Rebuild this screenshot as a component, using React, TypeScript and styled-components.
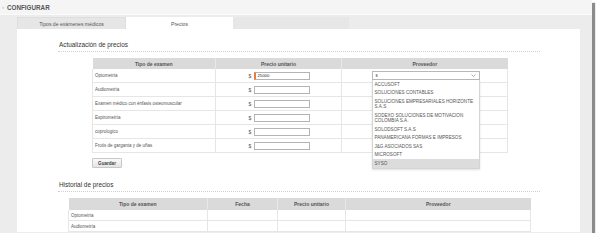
import React from 'react';
import styled, { createGlobalStyle } from 'styled-components';

const GlobalStyle = createGlobalStyle`
  html, body {
    margin: 0;
    padding: 0;
    background: #ffffff;
  }
  body {
    font-family: "Liberation Sans", Arial, sans-serif;
    color: #444;
  }
`;

const Frame = styled.div`
  width: 592px;
  height: 233px;
  background: #ececec;
  box-shadow: 3px 3px 1px rgba(0, 0, 0, 0.45);
  overflow: hidden;
  display: flex;
  flex-direction: column;
`;

const TopBar = styled.div`
  height: 14px;
  flex: none;
  background: #f5f5f5;
  border-bottom: 1px solid #fbfbfb;
  display: flex;
  align-items: center;
  padding-left: 2px;
  gap: 3px;
`;

const Marker = styled.span`
  font-size: 6px;
  color: #aaa;
`;

const TopTitle = styled.span`
  font-size: 6.3px;
  font-weight: bold;
  color: #555;
`;

const Body = styled.div`
  flex: 1;
  min-height: 0;
  display: flex;
  flex-direction: column;
  padding: 2px 12px 1px 17px;
`;

const Tabs = styled.div`
  display: flex;
  height: 12px;
  flex: none;
`;

const Tab = styled.div<{ $active?: boolean; $w: number }>`
  width: ${(p) => p.$w}px;
  display: flex;
  align-items: center;
  justify-content: center;
  font-size: 5.1px;
  color: #555;
  background: ${(p) => (p.$active ? '#ffffff' : '#e6e6e6')};
  border: 1px solid ${(p) => (p.$active ? '#ffffff' : '#dedede')};
  border-bottom: none;
  box-sizing: border-box;
`;

const TabFiller = styled.div`
  width: 116px;
  background: #e7e7e7;
`;

const Panel = styled.div`
  flex: 1;
  min-height: 0;
  overflow: hidden;
  background: #ffffff;
  padding: 12px 40px 0 41px;
`;

const SectionTitle = styled.div<{ $top?: number }>`
  margin-top: ${(p) => p.$top ?? 0}px;
  font-size: 6.4px;
  line-height: 8px;
  color: #333;
  padding: 0 0 2px 1px;
  border-bottom: 1px dotted #cfcfcf;
`;

const Table = styled.table<{ $left: number; $w: number }>`
  margin: 6px 0 0 ${(p) => p.$left}px;
  width: ${(p) => p.$w}px;
  border-collapse: collapse;
  table-layout: fixed;
`;

const Th = styled.th<{ $h: number }>`
  height: ${(p) => p.$h}px;
  padding: 0;
  background: #dadada;
  font-size: 5px;
  font-weight: bold;
  color: #555;
  text-align: center;
  border-left: 1px solid #e8e8e8;
  &:first-child {
    border-left: none;
  }
`;

const Td = styled.td<{ $h: number; $center?: boolean }>`
  height: ${(p) => p.$h}px;
  padding: 0 0 0 2px;
  font-size: 4.5px;
  color: #555;
  text-align: ${(p) => (p.$center ? 'center' : 'left')};
  border: 1px solid #e6e6e6;
  border-top: none;
`;

const PriceBox = styled.div`
  display: inline-flex;
  align-items: center;
  gap: 3px;
  font-size: 5px;
  color: #555;
`;

const PriceInput = styled.div<{ $focus?: boolean }>`
  width: 56px;
  height: 8px;
  box-sizing: border-box;
  border: 1px solid #b4b4b4;
  border-left: ${(p) => (p.$focus ? '2px solid #f07a3c' : '1px solid #b4b4b4')};
  font-size: 4.3px;
  line-height: 6px;
  padding-left: 1px;
  color: #222;
  text-align: left;
`;

const SelectWrap = styled.div`
  position: relative;
  display: inline-block;
  width: 108px;
  text-align: left;
`;

const SelectBox = styled.div`
  height: 9px;
  box-sizing: border-box;
  border: 1px solid #b8b8b8;
  display: flex;
  align-items: center;
  justify-content: space-between;
  padding: 0 3px 0 3px;
  font-size: 4.6px;
  color: #333;
  background: #fff;
`;

const Dropdown = styled.ul`
  position: absolute;
  top: 100%;
  left: 0;
  width: 108px;
  margin: 0;
  padding: 0;
  list-style: none;
  background: #ffffff;
  border: 1px solid #d4d4d4;
  border-top: none;
  box-sizing: border-box;
  box-shadow: 0 1px 2px rgba(0, 0, 0, 0.12);
  z-index: 5;
`;

const Option = styled.li<{ $hl?: boolean }>`
  padding: 1.5px 2px;
  font-size: 4.6px;
  line-height: 5.5px;
  color: #555;
  background: ${(p) => (p.$hl ? '#dcdcdc' : 'transparent')};
`;

const SaveButton = styled.button`
  margin: 5px 0 0 34px;
  width: 30px;
  height: 10px;
  padding: 0;
  font-family: inherit;
  font-size: 4.6px;
  font-weight: bold;
  color: #444;
  background: linear-gradient(#fafafa, #e4e4e4);
  border: 1px solid #c8c8c8;
  border-radius: 1px;
  display: block;
`;

const examenes = [
  'Optometría',
  'Audiometría',
  'Examen médico con énfasis osteomuscular',
  'Espirometría',
  'coprologico',
  'Frotis de garganta y de uñas',
];

const proveedores: [string, boolean?][] = [
  ['ACCUSOFT'],
  ['SOLUCIONES CONTABLES'],
  ['SOLUCIONES EMPRESARIALES HORIZONTE S.A.S'],
  ['SODEXO SOLUCIONES DE MOTIVACION COLOMBIA S.A.'],
  ['SOLODSOFT S.A.S'],
  ['PANAMERICANA FORMAS E IMPRESOS'],
  ['J&G ASOCIADOS SAS'],
  ['MICROSOFT'],
  ['SYSO', true],
];

const Chevron = () => (
  <svg width="5" height="3" viewBox="0 0 5 3">
    <path d="M0.5 0.5 L2.5 2.5 L4.5 0.5" fill="none" stroke="#777" strokeWidth="0.6" />
  </svg>
);

const App: React.FC = () => {
  return (
    <>
      <GlobalStyle />
      <Frame>
        <TopBar>
          <Marker>›</Marker>
          <TopTitle>CONFIGURAR</TopTitle>
        </TopBar>
        <Body>
          <Tabs>
            <Tab $w={109}>Tipos de exámenes médicos</Tab>
            <Tab $w={107} $active>
              Precios
            </Tab>
            <TabFiller />
          </Tabs>
          <Panel>
            <SectionTitle>Actualización de precios</SectionTitle>
            <Table $left={34} $w={415}>
              <colgroup>
                <col style={{ width: 123 }} />
                <col style={{ width: 126 }} />
                <col style={{ width: 166 }} />
              </colgroup>
              <thead>
                <tr>
                  <Th $h={11}>Tipo de examen</Th>
                  <Th $h={11}>Precio unitario</Th>
                  <Th $h={11}>Proveedor</Th>
                </tr>
              </thead>
              <tbody>
                {examenes.map((ex, i) => (
                  <tr key={ex}>
                    <Td $h={13}>{ex}</Td>
                    <Td $h={13} $center>
                      <PriceBox>
                        $<PriceInput $focus={i === 0}>{i === 0 ? '25000' : ''}</PriceInput>
                      </PriceBox>
                    </Td>
                    <Td $h={13} $center>
                      {i === 0 && (
                        <SelectWrap>
                          <SelectBox>
                            <span>s</span>
                            <Chevron />
                          </SelectBox>
                          <Dropdown>
                            {proveedores.map(([name, hl]) => (
                              <Option key={name} $hl={hl}>
                                {name}
                              </Option>
                            ))}
                          </Dropdown>
                        </SelectWrap>
                      )}
                    </Td>
                  </tr>
                ))}
              </tbody>
            </Table>
            <SaveButton>Guardar</SaveButton>
            <SectionTitle $top={13}>Historial de precios</SectionTitle>
            <Table $left={10} $w={462}>
              <colgroup>
                <col style={{ width: 139 }} />
                <col style={{ width: 70 }} />
                <col style={{ width: 68 }} />
                <col style={{ width: 185 }} />
              </colgroup>
              <thead>
                <tr>
                  <Th $h={12}>Tipo de examen</Th>
                  <Th $h={12}>Fecha</Th>
                  <Th $h={12}>Precio unitario</Th>
                  <Th $h={12}>Proveedor</Th>
                </tr>
              </thead>
              <tbody>
                {examenes.slice(0, 2).map((ex) => (
                  <tr key={ex}>
                    <Td $h={10}>{ex}</Td>
                    <Td $h={10} />
                    <Td $h={10} />
                    <Td $h={10} />
                  </tr>
                ))}
              </tbody>
            </Table>
          </Panel>
        </Body>
      </Frame>
    </>
  );
};

export default App;
